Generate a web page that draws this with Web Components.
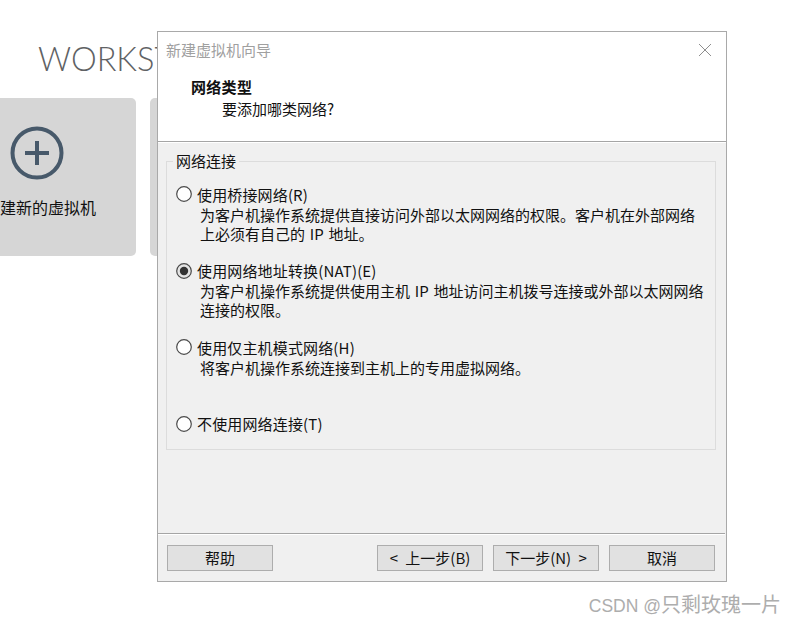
<!DOCTYPE html>
<html lang="zh">
<head>
<meta charset="utf-8">
<title>新建虚拟机向导</title>
<style>
  html, body { margin: 0; height: 100%; background: #fff; overflow: hidden; }
  body { font: 15px/19px "Noto Sans CJK SC", "Liberation Sans", sans-serif; color: #111; }
</style>
</head>
<body>
<home-screen>
  <home-tile label="创建新的虚拟机"></home-tile>
  <home-tile></home-tile>
</home-screen>

<wizard-dialog heading="新建虚拟机向导" step="网络类型" question="要添加哪类网络?">
  <group-box label="网络连接">
    <radio-option label="使用桥接网络(R)">为客户机操作系统提供直接访问外部以太网网络的权限。客户机在外部网络<br>上必须有自己的 IP 地址。</radio-option>
    <radio-option label="使用网络地址转换(NAT)(E)" checked>为客户机操作系统提供使用主机 IP 地址访问主机拨号连接或外部以太网网络<br>连接的权限。</radio-option>
    <radio-option label="使用仅主机模式网络(H)">将客户机操作系统连接到主机上的专用虚拟网络。</radio-option>
    <radio-option label="不使用网络连接(T)"></radio-option>
  </group-box>
  <wizard-button slot="footer">帮助</wizard-button>
  <wizard-button slot="footer" class="push">&lt; 上一步(B)</wizard-button>
  <wizard-button slot="footer">下一步(N) &gt;</wizard-button>
  <wizard-button slot="footer">取消</wizard-button>
</wizard-dialog>

<water-mark><span>CSDN @</span>只剩玫瑰一片</water-mark>

<script>
// Home page behind the dialog
class HomeScreen extends HTMLElement {
  constructor() {
    super();
    this.attachShadow({ mode: "open" }).innerHTML = `
      <style>
        :host { display: block; padding-top: 40px; }
        .logo {
          margin-left: 38px; width: 119px; height: 58px; overflow: hidden;
          font: 300 32.5px/38px Lato, "Liberation Sans", sans-serif;
          color: #5f6264; white-space: nowrap;
        }
        .tiles { display: flex; gap: 14px; margin-left: -62px; }
      </style>
      <div class="logo">WORKST</div>
      <div class="tiles"><slot></slot></div>
    `;
  }
}

class HomeTile extends HTMLElement {
  constructor() {
    super();
    const label = this.getAttribute("label");
    this.attachShadow({ mode: "open" }).innerHTML = `
      <style>
        :host {
          display: flex; flex-direction: column; align-items: center;
          box-sizing: border-box; width: 198px; height: 158px; padding-top: 28px;
          background: #d6d6d6; border-radius: 5px;
          font-size: 16px; line-height: 22px; color: #111;
        }
        svg { display: block; margin-bottom: 16px; }
        .label { padding-left: 6px; }
      </style>
      ${label ? `
      <svg width="54" height="54" viewBox="0 0 54 54" fill="none" stroke="#47596a" stroke-width="4">
        <circle cx="27" cy="27" r="24.5"/>
        <path d="M15 27H39M27 15V39"/>
      </svg>
      <div class="label">${label}</div>` : ""}
    `;
  }
}

// The modal wizard
class WizardDialog extends HTMLElement {
  constructor() {
    super();
    const heading = this.getAttribute("heading");
    const step = this.getAttribute("step");
    const question = this.getAttribute("question");
    this.attachShadow({ mode: "open" }).innerHTML = `
      <style>
        :host {
          position: absolute; left: 157px; top: 31px;
          display: flex; flex-direction: column;
          box-sizing: border-box; width: 570px; height: 551px;
          border: 1px solid #a9a9a9; background: #f0f0f0;
          font-size: 15px; line-height: 19px; color: #111;
        }
        header { height: 109px; background: #fff; border-bottom: 1px solid #a5a5a5; }
        .title { display: flex; justify-content: space-between; align-items: center; padding: 7px 14px 0 8px; height: 20px; color: #a0a0a0; }
        svg { display: block; margin-top: 2px; }
        .step { margin: 18px 0 0 33px; font-weight: 700; letter-spacing: .3px; }
        .question { margin: 3px 0 0 64px; }
        main { flex: 1; padding: 18px 10px 0 8px; border-top: 1px solid #fff; }
        footer {
          display: flex; gap: 10px; padding: 11px 10px 0 9px; height: 36px;
          border-top: 1px solid #a5a5a5; margin-right: 1px;
          box-shadow: 0 1px 0 #fff inset;
        }
        ::slotted(.push) { margin-left: auto; }
      </style>
      <header>
        <div class="title"><span>${heading}</span>
          <svg width="14" height="14" viewBox="0 0 14 14" fill="none" stroke="#8e8e8e"><path d="M1 1L13 13M13 1L1 13"/></svg>
        </div>
        <div class="step">${step}</div>
        <div class="question">${question}</div>
      </header>
      <main><slot></slot></main>
      <footer><slot name="footer"></slot></footer>
    `;
  }
}

class GroupBox extends HTMLElement {
  constructor() {
    super();
    this.attachShadow({ mode: "open" }).innerHTML = `
      <style>
        :host {
          display: block; position: relative; box-sizing: border-box;
          height: 289px; padding: 22.5px 0 0 9px;
          border: 1px solid #dcdcdc;
        }
        .legend { position: absolute; left: 6px; top: -11px; padding: 0 3px; background: #f0f0f0; }
      </style>
      <div class="legend">${this.getAttribute("label")}</div>
      <slot></slot>
    `;
  }
}

class RadioOption extends HTMLElement {
  constructor() {
    super();
    const checked = this.hasAttribute("checked");
    this.attachShadow({ mode: "open" }).innerHTML = `
      <style>
        :host { display: block; height: 76.5px; }
        .row { display: flex; align-items: center; gap: 5px; height: 19px; letter-spacing: .15px; }
        svg { display: block; flex: none; }
        .desc { margin: 1px 0 0 24px; white-space: nowrap; word-spacing: 1.5px; }
      </style>
      <div class="row">
        <svg width="16" height="16" viewBox="0 0 16 16">
          <circle cx="8" cy="8" r="7.3" fill="${checked ? "#e4e4e4" : "#fff"}" stroke="#4a4a4a" stroke-width="1.2"/>
          ${checked ? '<circle cx="8" cy="8" r="4.2" fill="#333"/>' : ""}
        </svg>
        <span>${this.getAttribute("label")}</span>
      </div>
      <div class="desc"><slot></slot></div>
    `;
  }
}

class WizardButton extends HTMLElement {
  constructor() {
    super();
    this.attachShadow({ mode: "open" }).innerHTML = `
      <style>
        :host {
          display: flex; align-items: center; justify-content: center;
          box-sizing: border-box; width: 106px; height: 26px; padding-bottom: 2px;
          background: #e1e1e1; border: 1px solid #adadad; white-space: nowrap; word-spacing: 4px;
        }
      </style>
      <slot></slot>
    `;
  }
}

class WaterMark extends HTMLElement {
  constructor() {
    super();
    this.attachShadow({ mode: "open" }).innerHTML = `
      <style>
        :host {
          position: absolute; right: 14px; top: 591px;
          font: 20px/26px "Noto Sans CJK SC", "Liberation Sans", sans-serif;
          color: #adadad; white-space: nowrap;
        }
        ::slotted(span) { font: 17.5px/26px "Liberation Sans", sans-serif; }
      </style>
      <slot></slot>
    `;
  }
}

customElements.define("home-screen", HomeScreen);
customElements.define("home-tile", HomeTile);
customElements.define("wizard-dialog", WizardDialog);
customElements.define("group-box", GroupBox);
customElements.define("radio-option", RadioOption);
customElements.define("wizard-button", WizardButton);
customElements.define("water-mark", WaterMark);
</script>
</body>
</html>
